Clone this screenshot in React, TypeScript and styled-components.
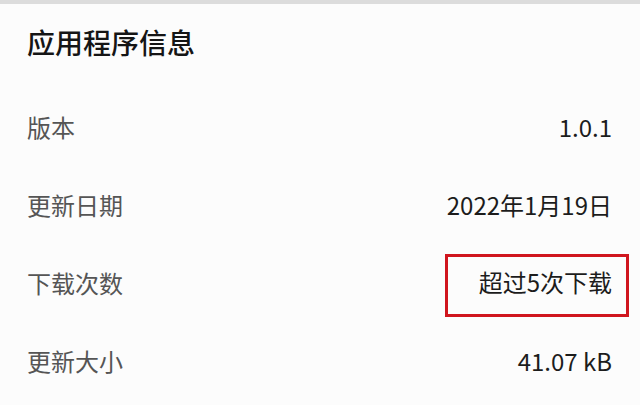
import styled, { createGlobalStyle } from 'styled-components'

const Global = createGlobalStyle`
  html, body {
    margin: 0;
    padding: 0;
    background: #fcfcfc;
  }
  body {
    font-family: "Noto Sans CJK SC", "Noto Sans", sans-serif;
  }
`;

const Page = styled.div`
  width: 640px;
  height: 405px;
  overflow: hidden;
  background: #fcfcfc;
  border-top: 4px solid #dcdcdc;
  box-sizing: border-box;
`;

const Title = styled.h2`
  margin: 0;
  padding: 24px 28px 31px 27px;
  font-size: 28px;
  line-height: 28px;
  font-weight: 500;
  color: #151515;
`;

const Row = styled.div`
  height: 78px;
  display: flex;
  align-items: center;
  justify-content: space-between;
  padding: 0 28px 0 27px;
`;

const Label = styled.span`
  font-size: 24px;
  color: #555;
`;

const Value = styled.span<{ $marked?: boolean }>`
  font-size: 24px;
  color: #1c1c1c;
  ${(props) => props.$marked && `
    box-sizing: border-box;
    height: 63px;
    display: flex;
    align-items: center;
    padding: 0 14px 8px 31px;
    margin: 6px -17px 0 0;
    border: 3px solid #d0161e;
  `}
`;

const rows: { label: string, value: string, marked?: boolean }[] = [
  { label: '版本', value: '1.0.1' },
  { label: '更新日期', value: '2022年1月19日' },
  { label: '下载次数', value: '超过5次下载', marked: true },
  { label: '更新大小', value: '41.07 kB' },
];

export default function App() {
  return (
    <Page>
      <Global />
      <Title>应用程序信息</Title>
      {rows.map((r) => (
        <Row key={r.label}>
          <Label>{r.label}</Label>
          <Value $marked={r.marked}>{r.value}</Value>
        </Row>
      ))}
    </Page>
  );
}
